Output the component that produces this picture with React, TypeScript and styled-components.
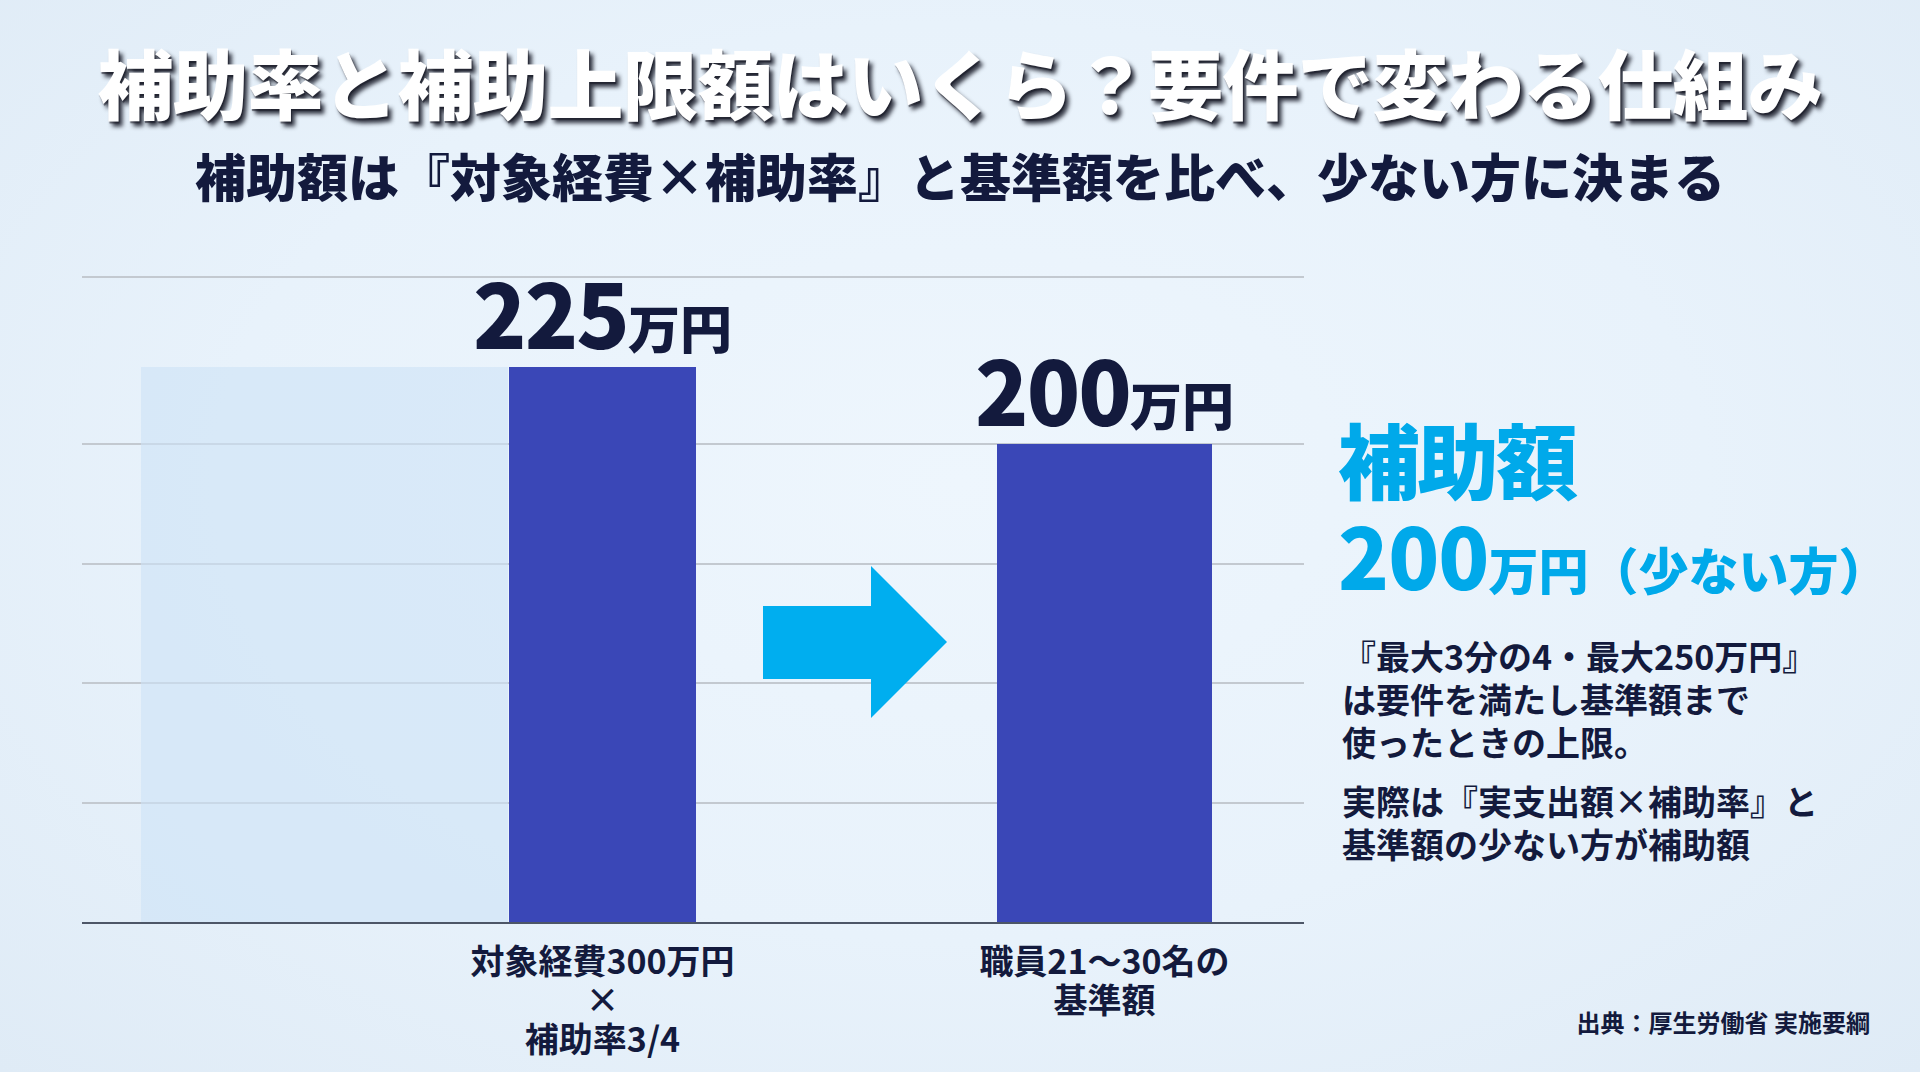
import React from "react";
import styled, { createGlobalStyle } from "styled-components";

const FONT = `"Noto Sans CJK JP", "Noto Sans", "Liberation Sans", sans-serif`;
const NAVY = "#131a3d";
const CYAN = "#00a9ea";
const BAR = "#3a47b7";

const PLOT_HEIGHT = 645;
const GRID_STEP = 119.5;

const GlobalStyle = createGlobalStyle`
  html, body {
    margin: 0;
    padding: 0;
  }
  body {
    font-family: ${FONT};
    background: #e6f1fa;
  }
`;

interface BarProps {
  h: number;
  w: number;
}

interface GapProps {
  w: number;
}

function App(): React.ReactElement {
  const gridOffsets = [GRID_STEP, GRID_STEP * 2, GRID_STEP * 3, GRID_STEP * 4, PLOT_HEIGHT];

  return (
    <>
      <GlobalStyle />
      <Page>
        <Header>
          <Title>補助率と補助上限額はいくら？要件で変わる仕組み</Title>
          <Subtitle>補助額は『対象経費×補助率』と基準額を比べ、少ない方に決まる</Subtitle>
        </Header>

        <Body>
          <ChartColumn>
            <Plot>
              {gridOffsets.map((o) => (
                <GridLine key={o} style={{ bottom: o }} />
              ))}
              <Gap w={59} />
              <GhostBar h={555} w={367} />
              <Gap w={1} />
              <BarGroup w={187}>
                <ValueLabel>
                  225<Unit>万円</Unit>
                </ValueLabel>
                <Bar h={555} w={187} />
              </BarGroup>
              <Gap w={67} />
              <ArrowWrap>
                <svg width="184" height="152" viewBox="0 0 184 152">
                  <polygon
                    points="0,40 108,40 108,0 184,76 108,152 108,113 0,113"
                    fill="#00aeef"
                  />
                </svg>
              </ArrowWrap>
              <Gap w={50} />
              <BarGroup w={215}>
                <ValueLabel>
                  200<Unit>万円</Unit>
                </ValueLabel>
                <Bar h={478} w={215} />
              </BarGroup>
            </Plot>

            <AxisLabels>
              <Gap w={427} />
              <AxisLabel w={187}>
                <span>対象経費300万円</span>
                <span>×</span>
                <span>補助率3/4</span>
              </AxisLabel>
              <Gap w={301} />
              <AxisLabel w={215}>
                <span>職員21〜30名の</span>
                <span>基準額</span>
              </AxisLabel>
            </AxisLabels>
          </ChartColumn>

          <SidePanel>
            <SideHeading>補助額</SideHeading>
            <SideAmount>
              200<SideUnit>万円（少ない方）</SideUnit>
            </SideAmount>
            <Note>
              『最大3分の4・最大250万円』
              <br />
              は要件を満たし基準額まで
              <br />
              使ったときの上限。
            </Note>
            <Note $gap={16}>
              実際は『実支出額×補助率』と
              <br />
              基準額の少ない方が補助額
            </Note>
            <Source>出典：厚生労働省 実施要綱</Source>
          </SidePanel>
        </Body>
      </Page>
    </>
  );
}

export default App;

const Page = styled.div`
  width: 1920px;
  height: 1072px;
  box-sizing: border-box;
  padding: 36px 50px 35px 0;
  display: flex;
  flex-direction: column;
  overflow: hidden;
  background: radial-gradient(
    ellipse at 50% 45%,
    #eef6fd 0%,
    #e8f2fb 55%,
    #dfebf6 100%
  );
`;

const Header = styled.header`
  display: flex;
  flex-direction: column;
  align-items: center;
  padding-left: 50px;
`;

const Title = styled.h1`
  margin: 0;
  font-size: 76px;
  line-height: 90px;
  font-weight: 900;
  color: #ffffff;
  letter-spacing: -1px;
  text-shadow: 4px 5px 4px rgba(20, 22, 35, 0.85), 1px 2px 1px rgba(60, 60, 70, 0.7);
`;

const Subtitle = styled.h2`
  margin: 19px 0 0;
  font-size: 51px;
  line-height: 60px;
  font-weight: 900;
  color: ${NAVY};
`;

const Body = styled.main`
  flex: 1;
  display: flex;
  margin-top: 72px;
  min-height: 0;
`;

const ChartColumn = styled.section`
  flex: 0 0 1222px;
  margin-left: 82px;
  display: flex;
  flex-direction: column;
`;

const Plot = styled.div`
  position: relative;
  height: ${PLOT_HEIGHT}px;
  display: flex;
  align-items: flex-end;
  border-bottom: 2px solid #4d5667;
  box-sizing: content-box;
`;

const GridLine = styled.div`
  position: absolute;
  left: 0;
  right: 0;
  height: 2px;
  margin-bottom: -1px;
  background: #c3c9d0;
`;

const Gap = styled.div<GapProps>`
  flex: 0 0 ${(p) => p.w}px;
  min-width: 0;
`;

const GhostBar = styled.div<BarProps>`
  position: relative;
  flex: 0 0 ${(p) => p.w}px;
  height: ${(p) => p.h}px;
  background: rgba(205, 227, 246, 0.6);
`;

const BarGroup = styled.div<GapProps>`
  position: relative;
  flex: 0 0 ${(p) => p.w}px;
  min-width: 0;
  display: flex;
  flex-direction: column;
  align-items: center;
`;

const Bar = styled.div<BarProps>`
  width: ${(p) => p.w}px;
  height: ${(p) => p.h}px;
  background: ${BAR};
`;

const ValueLabel = styled.div`
  margin-bottom: -4px;
  white-space: nowrap;
  font-size: 88px;
  line-height: 88px;
  font-weight: 900;
  color: ${NAVY};
  letter-spacing: -2px;
`;

const Unit = styled.span`
  font-size: 52px;
  letter-spacing: 0;
`;

const ArrowWrap = styled.div`
  position: relative;
  flex: 0 0 184px;
  height: 152px;
  margin-bottom: 204px;

  svg {
    display: block;
  }
`;

const AxisLabels = styled.div`
  display: flex;
  padding-top: 16px;
`;

const AxisLabel = styled.div<GapProps>`
  flex: 0 0 ${(p) => p.w}px;
  min-width: 0;
  display: flex;
  flex-direction: column;
  align-items: center;
  text-align: center;
  white-space: nowrap;
  font-size: 34px;
  line-height: 39px;
  font-weight: 700;
  color: ${NAVY};
`;

const SidePanel = styled.aside`
  flex: 1;
  min-width: 0;
  margin-left: 34px;
  display: flex;
  flex-direction: column;
  padding-top: 133px;
`;

const SideHeading = styled.div`
  font-size: 82px;
  line-height: 96px;
  font-weight: 900;
  color: ${CYAN};
  letter-spacing: -3px;
`;

const SideAmount = styled.div`
  font-size: 84px;
  line-height: 96px;
  font-weight: 900;
  color: ${CYAN};
  white-space: nowrap;
  letter-spacing: -1px;
`;

const SideUnit = styled.span`
  font-size: 50px;
  letter-spacing: 0;
`;

const Note = styled.p<{ $gap?: number }>`
  margin: ${(p) => (p.$gap !== undefined ? p.$gap : 18)}px 0 0 4px;
  font-size: 34px;
  line-height: 43px;
  font-weight: 700;
  color: ${NAVY};
  white-space: nowrap;
`;

const Source = styled.div`
  margin-top: auto;
  align-self: flex-end;
  font-size: 24px;
  line-height: 30px;
  font-weight: 700;
  color: ${NAVY};
`;
